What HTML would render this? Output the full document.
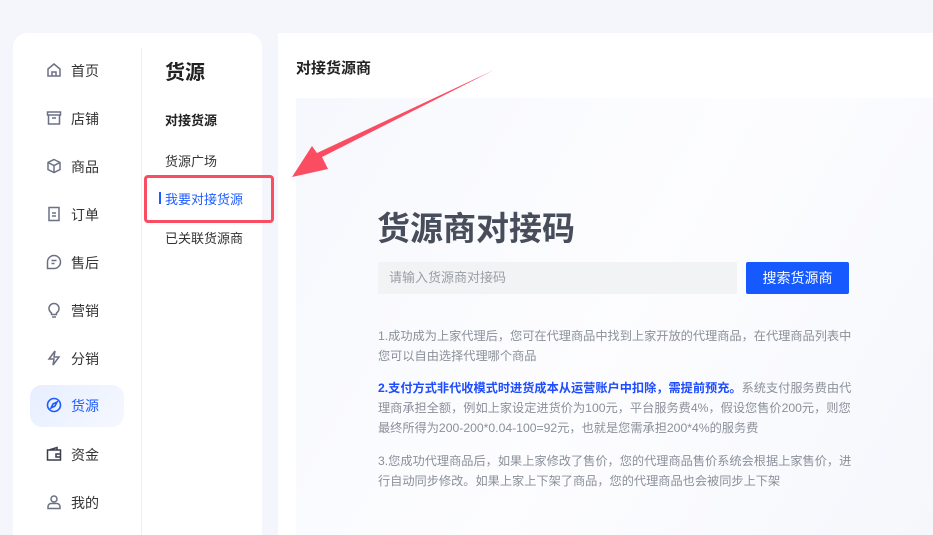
<!DOCTYPE html>
<html><head><meta charset="utf-8"><style>
*{margin:0;padding:0;box-sizing:border-box}
html,body{width:933px;height:535px;overflow:hidden}
body{background:#f4f6fb;font-family:"Liberation Sans","Noto Sans CJK SC",sans-serif;position:relative;color:#333}
.card{position:absolute;left:13px;top:33px;width:249px;height:520px;background:#fff;border-radius:14px}
.div{position:absolute;left:141px;top:48px;width:1px;height:490px;background:#eceef2}
.nav{position:absolute;left:30px;width:94px;height:42px;display:flex;align-items:center;font-size:14px;color:#333}
.nav svg{position:absolute;left:16px;top:12px}
.nav span{position:absolute;left:41px}
.nav.act{background:linear-gradient(135deg,#e6eeff,#f6f8ff);border-radius:12px;color:#1e5cff}
.sub{position:absolute;left:165px;font-size:13px;color:#333}
.main{position:absolute;left:278px;top:33px;width:660px;height:510px;background:#fff}
.inner{position:absolute;left:296px;top:98px;width:640px;height:440px;background:linear-gradient(120deg,#f6f8fd,#fdfdff 50%,#f5f7fc)}
p{font-size:12.2px;line-height:20px;color:#8a8f99;width:476px;position:absolute;left:378px}
</style></head><body>
<div class="card"></div>
<div class="div"></div>
<div class="nav" style="top:50px"><svg width="16" height="16" viewBox="0 0 16 16" fill="none" stroke="#6b7185" stroke-width="1.5"><path d="M2 7L8 2l6 5v7H2z M6 14v-4h4v4"/></svg><span>首页</span></div>
<div class="nav" style="top:98px"><svg width="16" height="16" viewBox="0 0 16 16" fill="none" stroke="#6b7185" stroke-width="1.5"><path d="M1.5 2h13v3h-13z M2.5 5v9h11V5 M6 8h4"/></svg><span>店铺</span></div>
<div class="nav" style="top:146px"><svg width="16" height="16" viewBox="0 0 16 16" fill="none" stroke="#6b7185" stroke-width="1.5"><path d="M8 1.5l6 3v7l-6 3-6-3v-7z M2 4.5l6 3 6-3 M8 7.5v7"/></svg><span>商品</span></div>
<div class="nav" style="top:194px"><svg width="16" height="16" viewBox="0 0 16 16" fill="none" stroke="#6b7185" stroke-width="1.5"><path d="M3 1.5h10v13H3z M6 7h4 M6 10h4"/></svg><span>订单</span></div>
<div class="nav" style="top:242px"><svg width="16" height="16" viewBox="0 0 16 16" fill="none" stroke="#6b7185" stroke-width="1.5"><path d="M8 1.5a6.5 6.5 0 1 1 0 13H1.5V8A6.5 6.5 0 0 1 8 1.5z M5.5 6.5h5 M5.5 9.5h3"/></svg><span>售后</span></div>
<div class="nav" style="top:290px"><svg width="16" height="16" viewBox="0 0 16 16" fill="none" stroke="#6b7185" stroke-width="1.5"><path d="M5.5 11C3.5 9.5 3 8 3 6.5a5 5 0 0 1 10 0c0 1.5-.5 3-2.5 4.5v1.5h-5z M6 15h4"/></svg><span>营销</span></div>
<div class="nav" style="top:338px"><svg width="16" height="16" viewBox="0 0 16 16" fill="none" stroke="#6b7185" stroke-width="1.5"><path d="M9 1L3 9h5l-1 6 6-8H8z"/></svg><span>分销</span></div>
<div class="nav act" style="top:385px"><svg width="16" height="16" viewBox="0 0 16 16" fill="none" stroke="#1e5cff" stroke-width="1.6"><circle cx="8" cy="8" r="6.5"/><path d="M11 5L9 9 5 11l2-4z"/></svg><span>货源</span></div>
<div class="nav" style="top:434px"><svg width="16" height="16" viewBox="0 0 16 16" fill="none" stroke="#3a3f4d" stroke-width="1.5"><path d="M1.5 4h13v10h-13z M3 4l8-2.5V4 M10 8h4.5v3H10z"/></svg><span>资金</span></div>
<div class="nav" style="top:482px"><svg width="16" height="16" viewBox="0 0 16 16" fill="none" stroke="#6b7185" stroke-width="1.5"><circle cx="8" cy="5" r="3"/><path d="M2 14.5v-2c0-1.5 1.5-3 3-3h6c1.5 0 3 1.5 3 3v2z"/></svg><span>我的</span></div>

<div class="sub" style="top:56px;font-size:20px;font-weight:bold;color:#222">货源</div>
<div class="sub" style="top:110px;font-weight:bold;color:#222">对接货源</div>
<div class="sub" style="top:151px">货源广场</div>
<div style="position:absolute;left:159px;top:192px;width:2px;height:12px;background:#1e5cff"></div>
<div class="sub" style="top:189px;color:#1e5cff">我要对接货源</div>
<div class="sub" style="top:228px">已关联货源商</div>
<div style="position:absolute;left:144px;top:175px;width:130px;height:48px;border:3px solid #fb4d62;border-radius:4px"></div>

<div class="main"></div>
<div class="inner"></div>
<div style="position:absolute;left:296px;top:57px;font-size:15px;font-weight:bold;color:#222">对接货源商</div>
<div style="position:absolute;left:377px;top:202px;font-size:33px;font-weight:bold;color:#474d5a">货源商对接码</div>
<div style="position:absolute;left:378px;top:262px;width:359px;height:32px;background:#f2f3f5;border-radius:2px;font-size:13px;color:#9a9ea6;line-height:32px;padding-left:11px">请输入货源商对接码</div>
<div style="position:absolute;left:746px;top:262px;width:103px;height:32px;background:#1659ff;border-radius:2px;font-size:14px;color:#fff;line-height:32px;text-align:center">搜索货源商</div>
<p style="top:326px">1.成功成为上家代理后，您可在代理商品中找到上家开放的代理商品，在代理商品列表中您可以自由选择代理哪个商品</p>
<p style="top:378px"><b style="color:#1e4cff">2.支付方式非代收模式时进货成本从运营账户中扣除，需提前预充。</b>系统支付服务费由代理商承担全额，例如上家设定进货价为100元，平台服务费4%，假设您售价200元，则您最终所得为200-200*0.04-100=92元，也就是您需承担200*4%的服务费</p>
<p style="top:451px">3.您成功代理商品后，如果上家修改了售价，您的代理商品售价系统会根据上家售价，进行自动同步修改。如果上家上下架了商品，您的代理商品也会被同步上下架</p>

<svg style="position:absolute;left:0;top:0" width="933" height="535"><polygon points="494,70 322,157 328,169 292,177 312,146 317,153" fill="#fb4d62"/></svg>
</body></html>
